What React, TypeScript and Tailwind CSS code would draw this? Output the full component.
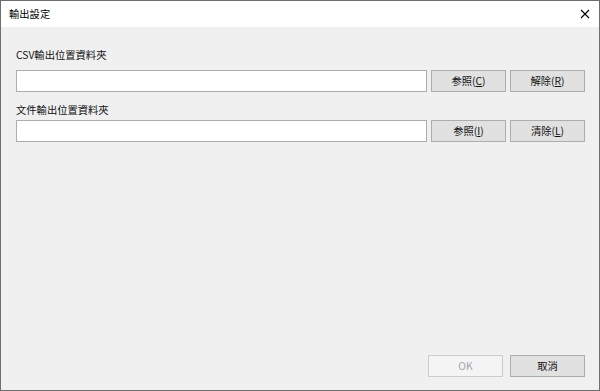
import React from 'react';

const font = { fontFamily: '"Noto Sans CJK TC", "Noto Sans", sans-serif' };

function Btn({ label, accel, disabled }: { label: string; accel?: string; disabled?: boolean }) {
  return (
    <button
      disabled={disabled}
      className={
        disabled
          ? 'w-[75px] h-[22px] shrink-0 border border-[#cccccc] bg-[#f4f4f4] text-[#a3a3a3] text-[10.3px] leading-none'
          : 'w-[75px] h-[22px] shrink-0 border border-[#adadad] bg-[#e1e1e1] text-[#111] text-[10.3px] leading-none'
      }
    >
      {label}
      {accel && (
        <>
          (<span className="underline underline-offset-1">{accel}</span>)
        </>
      )}
    </button>
  );
}

export default function App() {
  return (
    <div style={font} className="w-[600px] h-[391px] border border-[#6e6e6e] bg-[#f0f0f0] flex flex-col">
      <div className="h-[26px] shrink-0 bg-white flex items-center justify-between pl-[8px] pr-[9px]">
        <span className="text-[10.3px] text-black leading-none">輸出設定</span>
        <svg width="10" height="10" viewBox="0 0 10 10">
          <path d="M1 1 L9 9 M9 1 L1 9" stroke="#000" strokeWidth="1.1" />
        </svg>
      </div>

      <div className="flex-1 flex flex-col pl-[15px] pr-[14px] pt-[21px] pb-[13px]">
        <div className="text-[10.3px] leading-[14px] text-[#111]">CSV輸出位置資料夾</div>
        <div className="flex gap-[4px] mt-[8px]">
          <input className="flex-1 h-[22px] bg-white border border-[#adadad] outline-none" />
          <Btn label="参照" accel="C" />
          <Btn label="解除" accel="R" />
        </div>

        <div className="text-[10.3px] leading-[14px] text-[#111] mt-[11px]">文件輸出位置資料夾</div>
        <div className="flex gap-[4px] mt-[3px]">
          <input className="flex-1 h-[22px] bg-white border border-[#adadad] outline-none" />
          <Btn label="参照" accel="I" />
          <Btn label="清除" accel="L" />
        </div>

        <div className="mt-auto flex justify-end gap-[7px]">
          <Btn label="OK" disabled />
          <Btn label="取消" />
        </div>
      </div>
    </div>
  );
}
